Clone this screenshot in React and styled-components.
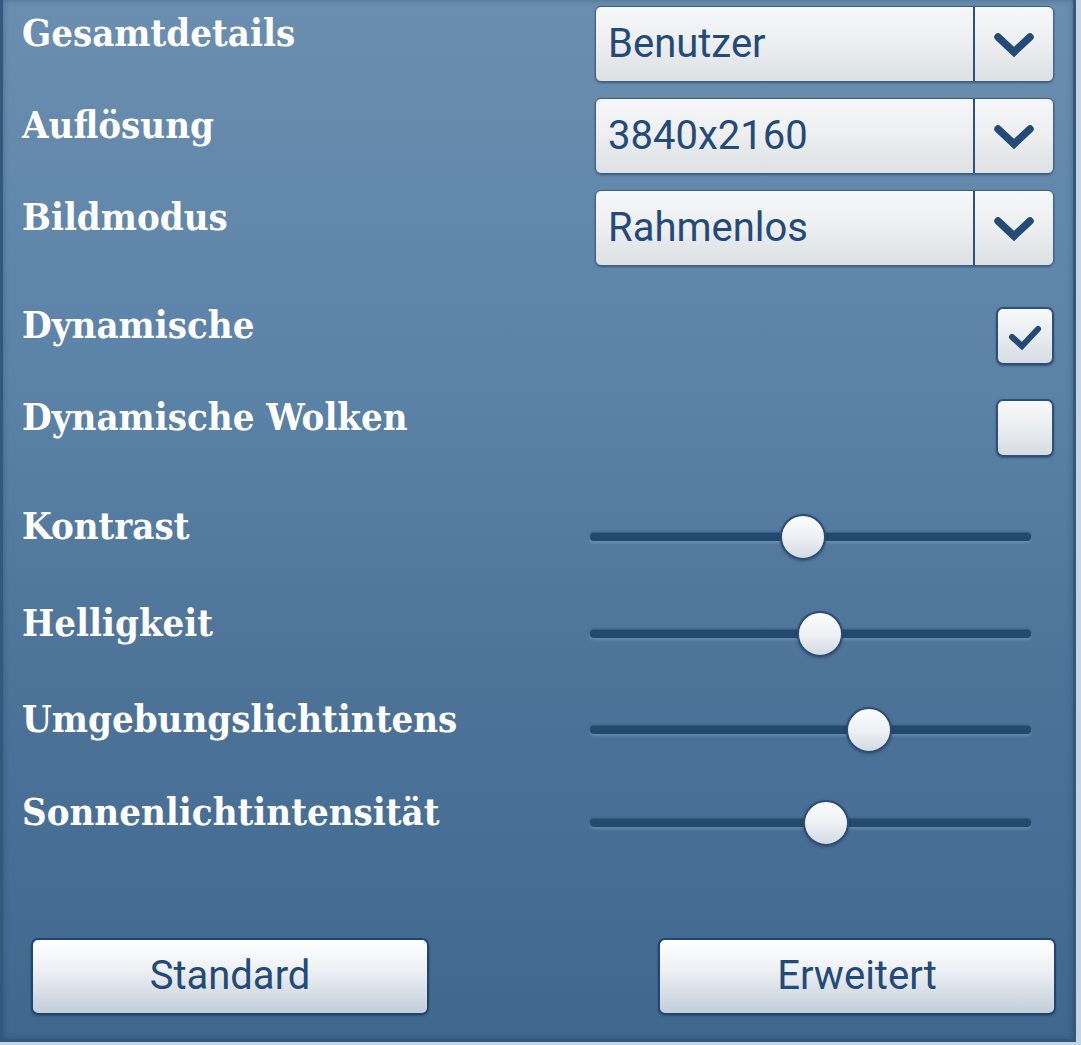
import React from "react";
import styled, { createGlobalStyle } from "styled-components";

const Global = createGlobalStyle`
  html, body { margin: 0; padding: 0; background: #c5d4e3; }
  #root { width: 1081px; height: 1045px; overflow: hidden; }
`;

const Panel = styled.div`
  box-sizing: border-box;
  width: 1076px;
  height: 1042px;
  background: linear-gradient(180deg, #6a8eaf 0%, #5c83a8 35%, #4d7399 65%, #40688f 100%);
  border: 3px solid #33587d;
  border-top: none;
  box-shadow: inset 0 0 6px rgba(20, 45, 75, 0.35);
  display: flex;
  flex-direction: column;
  padding: 6px 19px 24px 19px;
`;

const Row = styled.div`
  display: flex;
  align-items: center;
  justify-content: space-between;
  height: 76px;
  flex-shrink: 0;
  margin-top: ${(p) => p.$mt || 0}px;
`;

const Label = styled.div`
  font-family: "DejaVu Serif Condensed", "DejaVu Serif", serif;
  font-weight: bold;
  font-size: 38px;
  line-height: 1;
  color: #ffffff;
  margin-bottom: 22px;
  white-space: nowrap;
`;

const Select = styled.div`
  box-sizing: border-box;
  width: 459px;
  height: 76px;
  display: flex;
  border-radius: 6px;
  border: 1px solid #3c6086;
  background: linear-gradient(180deg, #f6f7f8 0%, #eceef0 50%, #dde1e4 100%);
  box-shadow: 0 1px 2px rgba(20, 45, 75, 0.5);
  overflow: hidden;
`;

const SelectText = styled.div`
  flex: 1;
  display: flex;
  align-items: center;
  padding-left: 12px;
  padding-bottom: 2px;
  font-family: Roboto, "Liberation Sans", sans-serif;
  font-size: 40px;
  color: #234a78;
  border-right: 2px solid #2c5180;
`;

const SelectArrow = styled.div`
  width: 78px;
  display: flex;
  align-items: center;
  justify-content: center;
`;

const Check = styled.div`
  box-sizing: border-box;
  width: 58px;
  height: 58px;
  border-radius: 7px;
  border: 2px solid #2d5079;
  background: linear-gradient(180deg, #f8f9fa 0%, #e8ebee 55%, #d6dce2 100%);
  box-shadow: 0 1px 2px rgba(20, 45, 75, 0.5);
  display: flex;
  align-items: center;
  justify-content: center;
`;

const Slider = styled.div`
  position: relative;
  width: 441px;
  height: 48px;
  margin-right: 23px;
  display: flex;
  align-items: center;
`;

const Track = styled.div`
  width: 100%;
  height: 8px;
  border-radius: 4px;
  background: #23496f;
  box-shadow: 0 -1px 2px rgba(20, 40, 70, 0.45), 0 2px 3px rgba(200, 220, 240, 0.25);
`;

const Thumb = styled.div`
  position: absolute;
  top: 1px;
  width: 46px;
  height: 46px;
  margin-left: -23px;
  box-sizing: border-box;
  border-radius: 50%;
  border: 2px solid #2d4d70;
  background: linear-gradient(180deg, #fbfcfd 0%, #eef1f4 50%, #d3dae2 100%);
  box-shadow: 0 1px 3px rgba(20, 40, 70, 0.45);
`;

const ButtonRow = styled.div`
  margin-top: auto;
  display: flex;
  justify-content: space-between;
  padding-left: 9px;
  margin-right: -2px;
`;

const Button = styled.div`
  box-sizing: border-box;
  width: 398px;
  height: 77px;
  border-radius: 7px;
  border: 2px solid #1f4572;
  background: linear-gradient(180deg, #ffffff 0%, #eef1f4 40%, #c3ceda 100%);
  box-shadow: 0 1px 2px rgba(20, 40, 70, 0.4);
  display: flex;
  align-items: center;
  justify-content: center;
  padding-bottom: 2px;
  font-family: Roboto, "Liberation Sans", sans-serif;
  font-size: 40px;
  color: #234a78;
`;

const Chevron = () => (
  <svg width="42" height="30" viewBox="0 0 42 30">
    <polyline
      points="5,8 21,23 37,8"
      fill="none"
      stroke="#244a77"
      strokeWidth="7.5"
      strokeLinecap="round"
      strokeLinejoin="miter"
    />
  </svg>
);

const CheckMark = () => (
  <svg width="40" height="32" viewBox="0 0 40 32">
    <polyline
      points="7,17 17,26 33,9"
      fill="none"
      stroke="#244a77"
      strokeWidth="6"
      strokeLinecap="round"
      strokeLinejoin="miter"
    />
  </svg>
);

const selects = [
  { label: "Gesamtdetails", value: "Benutzer", mt: 0 },
  { label: "Auflösung", value: "3840x2160", mt: 16 },
  { label: "Bildmodus", value: "Rahmenlos", mt: 16 },
];

const checks = [
  { label: "Dynamische", on: true, mt: 32 },
  { label: "Dynamische Wolken", on: false, mt: 16 },
];

const sliders = [
  { label: "Kontrast", v: 48.3, mt: 33 },
  { label: "Helligkeit", v: 52.2, mt: 21 },
  { label: "Umgebungslichtintens", v: 63.3, mt: 20 },
  { label: "Sonnenlichtintensität", v: 53.5, mt: 17 },
];

export default function App() {
  return (
    <>
      <Global />
      <Panel>
        {selects.map((s) => (
          <Row key={s.label} $mt={s.mt}>
            <Label>{s.label}</Label>
            <Select>
              <SelectText>{s.value}</SelectText>
              <SelectArrow>
                <Chevron />
              </SelectArrow>
            </Select>
          </Row>
        ))}
        {checks.map((c) => (
          <Row key={c.label} $mt={c.mt}>
            <Label>{c.label}</Label>
            <Check>{c.on && <CheckMark />}</Check>
          </Row>
        ))}
        {sliders.map((s) => (
          <Row key={s.label} $mt={s.mt}>
            <Label>{s.label}</Label>
            <Slider>
              <Track />
              <Thumb style={{ left: `${s.v}%` }} />
            </Slider>
          </Row>
        ))}
        <ButtonRow>
          <Button>Standard</Button>
          <Button>Erweitert</Button>
        </ButtonRow>
      </Panel>
    </>
  );
}
